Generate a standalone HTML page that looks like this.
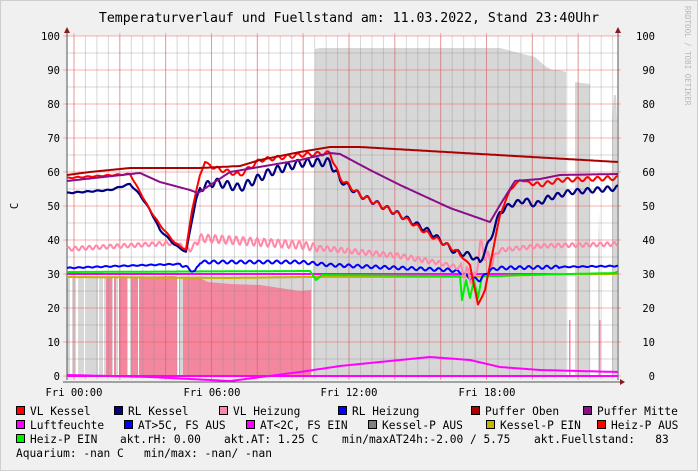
<!DOCTYPE html>
<html><head><meta charset="utf-8"><style>
html,body{margin:0;padding:0;background:#f0f0f0;}
body{width:698px;height:471px;overflow:hidden;position:relative;font-family:"DejaVu Sans Mono","Liberation Mono",monospace;}
svg{position:absolute;left:0;top:0;}
text{white-space:pre;}
</style></head><body>
<svg id="s" width="698" height="471" xmlns="http://www.w3.org/2000/svg" font-family="DejaVu Sans Mono, Liberation Mono, monospace">
<rect x="0" y="0" width="698" height="471" fill="#f0f0f0"/>
<rect x="0.5" y="0.5" width="697" height="470" fill="none" stroke="#cfcfcf"/>
<rect x="67" y="36" width="551" height="340" fill="#ffffff"/>
<g id="fills"></g>
<g id="grid"></g>
<g id="lines"></g>
<text x="349" y="22" font-size="13.2" text-anchor="middle" fill="#000">Temperaturverlauf und Fuellstand am: 11.03.2022, Stand 23:40Uhr</text>
<text transform="translate(685,6) rotate(90)" font-size="7.5" fill="#b8b8b8">RRDTOOL / TOBI OETIKER</text>
<text transform="translate(18,206) rotate(-90)" font-size="10.5" text-anchor="middle" fill="#000">C</text>
<g id="ylab" font-size="10.5" fill="#000"></g>
<g font-size="10.5" fill="#000" text-anchor="middle">
<text x="74" y="396">Fri 00:00</text><text x="212" y="396">Fri 06:00</text><text x="349" y="396">Fri 12:00</text><text x="487" y="396">Fri 18:00</text>
</g>
<g id="leg" font-size="11.2" fill="#000"></g>
</svg>
<script>
var NS="http://www.w3.org/2000/svg";
function el(p,t,a,txt){var e=document.createElementNS(NS,t);for(var k in a)e.setAttribute(k,a[k]);if(txt!=null)e.textContent=txt;document.getElementById(p).appendChild(e);return e;}
var X0=67,X1=618,Y0=376;
function Y(v){return Y0-v*3.4;}
for(var x=74-11.46;x<=X1;x+=11.46){if(x<X0)continue;el("grid","line",{x1:x,y1:36,x2:x,y2:379,stroke:"rgba(140,140,140,0.35)","stroke-width":1});}
for(var x=74;x<=X1;x+=45.83){el("grid","line",{x1:x,y1:33,x2:x,y2:380,stroke:"rgba(240,80,80,0.45)","stroke-width":1});}
for(var v=5;v<=100;v+=10){el("grid","line",{x1:X0,y1:Y(v),x2:X1,y2:Y(v),stroke:"rgba(140,140,140,0.35)"});}
for(var v=0;v<=100;v+=10){el("grid","line",{x1:63,y1:Y(v),x2:X1+3,y2:Y(v),stroke:"rgba(240,80,80,0.45)"});
 el("ylab","text",{x:60,y:Y(v)+4,"text-anchor":"end"},String(v));el("ylab","text",{x:655,y:Y(v)+4,"text-anchor":"end"},String(v));}
el("grid","line",{x1:67,y1:30,x2:67,y2:380,stroke:"#555"});
el("grid","line",{x1:618,y1:30,x2:618,y2:380,stroke:"#555"});
el("grid","line",{x1:63,y1:382,x2:622,y2:382,stroke:"#555"});
el("grid","polygon",{points:"64,33 70,33 67,27",fill:"#8b1a1a"});
el("grid","polygon",{points:"615,33 621,33 618,27",fill:"#8b1a1a"});
el("grid","polygon",{points:"620,379 620,385 625,382",fill:"#8b1a1a"});
function interp(pts,x){for(var i=0;i<pts.length-1;i++){if(x>=pts[i][0]&&x<=pts[i+1][0]){var t=(x-pts[i][0])/(pts[i+1][0]-pts[i][0]||1);return pts[i][1]+t*(pts[i+1][1]-pts[i][1]);}}return pts[pts.length-1][1];}
function line(pts,col,w,amp,per,from,to){var s="";from=from||pts[0][0];to=to||pts[pts.length-1][0];
 for(var x=from;x<=to;x+=1){var y=interp(pts,x);var a=typeof amp=="function"?amp(x):(amp||0);y+=a*Math.sin(x*2*Math.PI/(per||10));s+=x+","+y.toFixed(1)+" ";}
 el("lines","polyline",{points:s,fill:"none",stroke:col,"stroke-width":w||2,"stroke-linejoin":"round"});}
function area(pts,col){var s=pts[0][0]+","+Y0+" ";pts.forEach(function(p){s+=p[0]+","+p[1]+" ";});s+=pts[pts.length-1][0]+","+Y0;el("fills","polygon",{points:s,fill:col});}
area([[67,276],[312,276]],"#d7d7d7");
area([[313,284],[315,49],[320,48],[500,48],[515,52],[535,57],[545,66],[552,70],[560,70],[566,72]],"#d7d7d7");
area([[575,82],[590,84]],"#d7d7d7");
area([[612,120],[614,95],[616,95],[617,120]],"#d7d7d7");
area([[598,260],[599,210],[600,260]],"#d7d7d7");
[[70,2],[76,2],[84,2],[98,1],[103,1],[113,1],[118,1],[128,2]].forEach(function(g){el("fills","rect",{x:g[0],y:270,width:g[1],height:106,fill:"#fff"});});
area([[106,277],[112,277]],"#f4869f");
area([[114,277],[116,277]],"#f4869f");
area([[119,277],[127,277]],"#f4869f");
area([[131,277],[174,276],[180,278]],"#f4869f");
area([[183,277],[200,278],[208,282],[230,284],[260,285],[280,288],[300,291],[311,290]],"#f4869f");
el("fills","rect",{x:177,y:276,width:2,height:100,fill:"#fff"});
el("fills","rect",{x:138,y:276,width:1,height:100,fill:"#fff"});
el("fills","rect",{x:569,y:320,width:1.5,height:56,fill:"#f4869f"});
el("fills","rect",{x:599,y:320,width:1.5,height:56,fill:"#f4869f"});
line([[67,274],[610,274],[618,272]],"#ff00ff",2);
line([[67,375],[150,377],[230,381],[300,372],[340,366],[380,362],[430,357],[470,360],[500,367],[540,370],[618,372]],"#ff00ff",2);
line([[67,376],[618,376]],"#ff00ff",2);
line([[67,277],[230,278],[300,277],[320,277],[460,277],[500,276],[560,274],[618,274]],"#c8b400",2);
line([[67,272],[310,271],[316,280],[322,275],[450,276],[460,276],[462,300],[466,280],[470,298],[474,280],[478,298],[482,276],[500,276],[520,275],[618,273]],"#00ee00",2);
line([[67,268],[120,266],[180,264],[195,272],[200,262],[300,262],[330,265],[400,268],[450,270],[460,272],[470,278],[480,280],[490,270],[500,268],[618,266]],"#0000ff",2,function(x){return x>180&&x<560?1.5:0.5;},9);
line([[67,249],[120,246],[175,243],[190,250],[200,238],[300,245],[320,248],[400,256],[440,263],[460,268],[475,280],[480,245],[490,262],[500,250],[540,246],[618,244]],"#ff88a8",2,function(x){return x>195&&x<320?4:(x>320&&x<430?2.5:(x>460&&x<495?7:2));},7);
line([[67,193],[110,190],[130,184],[140,195],[150,210],[160,230],[175,245],[186,252],[192,220],[196,200],[200,188],[215,182],[240,188],[270,172],[300,163],[330,162],[340,180],[360,195],[400,215],[430,232],[455,252],[470,255],[480,262],[490,240],[500,212],[510,205],[525,200],[535,205],[548,198],[570,192],[618,188]],"#000080",2.2,function(x){return x>200&&x<340?4:(x>340&&x<520?2.5:(x>520?2.5:0.5));},10);
line([[67,178],[130,174],[140,192],[150,210],[160,225],[175,243],[186,250],[192,210],[200,175],[205,162],[215,168],[240,175],[260,160],[300,155],[330,153],[340,178],[360,195],[400,215],[430,235],[455,250],[470,265],[478,305],[485,290],[492,255],[500,215],[510,190],[520,180],[540,185],[560,180],[618,178]],"#ff0000",2,function(x){return x>210&&x<330?2:(x>330&&x<460?2:(x>530?2:0.5));},10);
line([[67,181],[140,173],[160,182],[190,190],[198,193],[230,172],[300,160],[330,153],[340,154],[370,170],[400,185],[450,208],[490,222],[500,205],[515,181],[540,179],[560,175],[618,174]],"#8a0d8a",2);
line([[67,175],[90,172],[130,168],[200,168],[240,166],[260,160],[300,152],[330,147],[360,147],[618,162]],"#aa0000",2);
var L=[
[415,[[16,"#ff0000","VL Kessel"],[114,"#000080","RL Kessel"],[219,"#ff88a8","VL Heizung"],[338,"#0000ff","RL Heizung"],[471,"#aa0000","Puffer Oben"],[583,"#8a0d8a","Puffer Mitte"]]],
[429,[[16,"#ff00ff","Luftfeuchte"],[124,"#0000ff","AT>5C, FS AUS"],[246,"#ff00ff","AT<2C, FS EIN"],[368,"#808080","Kessel-P AUS"],[486,"#c8b400","Kessel-P EIN"],[597,"#ff0000","Heiz-P AUS"]]],
[443,[[16,"#00ee00","Heiz-P EIN"]]]];
L.forEach(function(r){r[1].forEach(function(it){el("leg","rect",{x:it[0]+0.5,y:r[0]-8.5,width:8,height:8,fill:it[1],stroke:"#000","stroke-width":1});el("leg","text",{x:it[0]+14,y:r[0]},it[2]);});});
el("leg","text",{x:120,y:443},"akt.rH: 0.00");
el("leg","text",{x:224,y:443},"akt.AT: 1.25 C");
el("leg","text",{x:342,y:443},"min/maxAT24h:-2.00 / 5.75");
el("leg","text",{x:534,y:443},"akt.Fuellstand:   83");
el("leg","text",{x:16,y:457},"Aquarium: -nan C   min/max: -nan/ -nan");
</script>
</body></html>
